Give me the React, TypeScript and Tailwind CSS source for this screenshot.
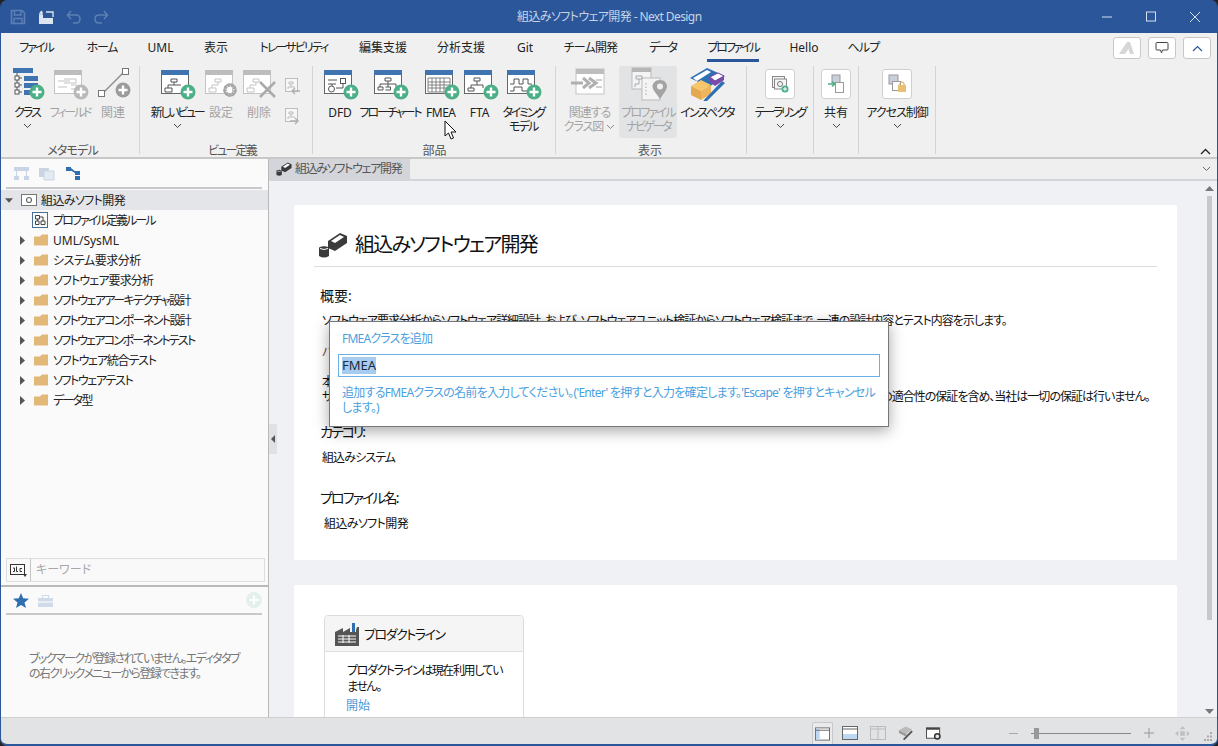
import type { ReactNode } from "react";

const Badge = ({ cx, cy, color = "#4caf87" }: { cx: number; cy: number; color?: string }) => (
  <g>
    <circle cx={cx} cy={cy} r={7.5} fill={color} />
    <path d={`M${cx - 4.5} ${cy}H${cx + 4.5}M${cx} ${cy - 4.5}V${cy + 4.5}`} stroke="#fff" strokeWidth={2.4} />
  </g>
);

const Win = ({ bar = "#3f74b0", line = "#666", children }: { bar?: string; line?: string; children?: ReactNode }) => (
  <g>
    <rect x="4.5" y="3.5" width="27" height="23" fill="#fff" stroke={line} />
    <rect x="4" y="3" width="28" height="5" fill={bar} />
    {children}
  </g>
);

const Icon = ({ children, w = 40 }: { children: ReactNode; w?: number }) => (
  <svg width={w} height="34" viewBox={`0 0 ${w} 34`} fill="none" className="shrink-0">
    {children}
  </svg>
);

const ClassIcon = () => (
  <Icon>
    <g transform="translate(-1 0)">
      <rect x="7" y="1" width="20" height="5" fill="#3f74b0" />
      <path d="M11 6V26M11 11H16M11 18H16M11 25H16" stroke="#555" />
      <rect x="9" y="9" width="4" height="4" fill="#fff" stroke="#555" />
      <rect x="9" y="16" width="4" height="4" fill="#fff" stroke="#555" />
      <rect x="9" y="23" width="4" height="4" fill="#fff" stroke="#555" />
      <rect x="18" y="9" width="14" height="5" fill="#3f74b0" />
      <rect x="18" y="16" width="14" height="5" fill="#3f74b0" />
      <rect x="18" y="23" width="10" height="5" fill="#3f74b0" />
      <Badge cx={31} cy={25} />
    </g>
  </Icon>
);

const FieldIcon = () => (
  <Icon>
    <Win bar="#bdbdbd" line="#c4c4c4">
      <path d="M8 14H20M8 20H17M14 12H26V16H14M21 18H27V22H21" stroke="#c4c4c4" />
    </Win>
    <Badge cx={31} cy={25} color="#b9b9b9" />
  </Icon>
);

const RelationIcon = () => (
  <Icon>
    <path d="M10 26L30 6" stroke="#8d8d8d" strokeWidth="1.5" />
    <rect x="5.5" y="23.5" width="6" height="6" fill="#fff" stroke="#777" />
    <rect x="29.5" y="1.5" width="6" height="6" fill="#fff" stroke="#777" />
    <Badge cx={30} cy={23} color="#9b9b9b" />
  </Icon>
);

const ViewIcon = () => (
  <Icon>
    <Win>
      <path d="M14 12H20V15H14ZM17 15V18H11V21M11 21H8V25H15V21H11M17 18H24" stroke="#555" />
    </Win>
    <Badge cx={31} cy={25} />
  </Icon>
);

const SettingIcon = () => (
  <Icon>
    <Win bar="#bdbdbd" line="#c4c4c4">
      <path d="M14 12H20V15H14ZM17 15V18H11V21M11 21H8V25H15V21H11" stroke="#c4c4c4" />
    </Win>
    <circle cx="29" cy="23" r="5" stroke="#a8a8a8" strokeWidth="3.5" strokeDasharray="2.4 1" />
    <circle cx="29" cy="23" r="5.6" stroke="#a8a8a8" strokeWidth="2" />
  </Icon>
);

const DeleteIcon = () => (
  <Icon>
    <Win bar="#bdbdbd" line="#c4c4c4">
      <path d="M14 12H20V15H14ZM17 15V18H11V21M11 21H8V25H15V21H11" stroke="#c4c4c4" />
    </Win>
    <path d="M21 15L36 30M36 15L21 30" stroke="#ababab" strokeWidth="2.6" />
  </Icon>
);

const DfdIcon = () => (
  <Icon>
    <Win>
      <path d="M8 13H17M8 17H16M12 17V21" stroke="#555" />
      <rect x="20.5" y="11.5" width="5" height="5" stroke="#555" />
      <path d="M23 17V21H16" stroke="#555" />
      <circle cx="11.5" cy="22" r="3" fill="#fff" stroke="#555" />
    </Win>
    <Badge cx={31} cy={25} />
  </Icon>
);

const FlowIcon = () => (
  <Icon>
    <Win>
      <path d="M15 11H21V14H15ZM18 14V17M10 20V17H26V20M8 20H13V23H8ZM15.5 20H20.5V23H15.5M18 17V20" stroke="#555" />
    </Win>
    <Badge cx={31} cy={25} />
  </Icon>
);

const FmeaIcon = () => (
  <Icon>
    <Win>
      <path d="M7 11H29V25H7ZM7 15H29M7 18H29M7 21H29M11 11V25M15 11V25M19 11V25M23 11V25" stroke="#777" strokeWidth="0.9" />
    </Win>
    <Badge cx={31} cy={25} />
  </Icon>
);

const FtaIcon = () => (
  <Icon>
    <Win>
      <path d="M14 11H20V14H14ZM17 14V18M11 18H23M11 18V21M23 18V21M8 21H14V24H8Z" stroke="#555" />
    </Win>
    <Badge cx={31} cy={25} />
  </Icon>
);

const TimingIcon = () => (
  <Icon>
    <Win>
      <path d="M7 17H11V12H16V17H20V12H25V17H29M7 24H11V20H19V24H25" stroke="#555" />
    </Win>
    <Badge cx={31} cy={25} />
  </Icon>
);

const RelatedDiagramIcon = () => (
  <Icon>
    <rect x="6" y="2" width="28" height="25" fill="#fff" stroke="#c4c4c4" />
    <rect x="6" y="2" width="28" height="5" fill="#bdbdbd" />
    <path d="M1 16H13M13 11L19 16L13 21M19 11L26 16L19 21" stroke="#b0b0b0" strokeWidth="3" />
    <path d="M26 13H32M26 20H32" stroke="#a0a0a0" />
  </Icon>
);

const NavigatorIcon = () => (
  <Icon>
    <rect x="4" y="1" width="19" height="21" fill="#f4f4f4" stroke="#bbb" />
    <rect x="4" y="1" width="19" height="4" fill="#b5b5b5" />
    <rect x="14" y="11" width="18" height="22" fill="#f4f4f4" stroke="#bbb" />
    <path d="M8 9H14V12H8ZM11 12V17H7V20" stroke="#a8a8a8" />
    <path d="M18 16V28" stroke="#aaa" strokeDasharray="1.5 2" />
    <path d="M32 13C27 13 24.5 16.5 24.5 19.5C24.5 23 29 27 32 32C35 27 39 23 39 19.5C39 16.5 37 13 32 13Z" fill="#a3a3a3" />
    <circle cx="32" cy="19.5" r="3" fill="#f0f0f0" />
  </Icon>
);

const InspectorIcon = () => (
  <Icon>
    <path d="M3 11L20 1L38 9L22 20Z" fill="#2f6fb5" />
    <path d="M6 11L20 3L24 5L10 14Z" fill="#fff" />
    <path d="M23 10L31 6L37 9L28 14Z" fill="#fff" stroke="#7c4aa8" />
    <path d="M23 10V15L28 19V14ZM28 14V19L37 13V9Z" fill="#7c4aa8" />
    <path d="M4 19L14 13L24 18L14 24Z" fill="#f7c66b" />
    <path d="M4 19V28L14 33V24Z" fill="#e4a94e" />
    <path d="M14 24V33L24 27V18Z" fill="#edb65c" />
    <path d="M17 33L35 14L38 16L20 34L15 36Z" fill="#2f6fb5" />
  </Icon>
);

const BoxButton = ({ children }: { children: ReactNode }) => (
  <span className="flex h-[30px] w-[30px] items-center justify-center rounded-[3px] border border-[#cfcfcf] bg-white">
    {children}
  </span>
);

const Chevron = ({ color = "#444" }: { color?: string }) => (
  <svg width="9" height="6" viewBox="0 0 9 6" fill="none">
    <path d="M1 1L4.5 4.5L8 1" stroke={color} />
  </svg>
);

type RibbonButtonProps = {
  icon: ReactNode;
  label: ReactNode;
  second?: ReactNode;
  chevron?: boolean;
  disabled?: boolean;
  active?: boolean;
  className: string;
  track?: string;
  track2?: string;
};

const RibbonButton = ({ icon, label, second, chevron, disabled, active, className, track = "", track2 = "" }: RibbonButtonProps) => (
  <div
    className={`flex h-[72px] flex-col items-center rounded-[2px] pt-[1px] ${className} ${active ? "bg-[#e2e3e5]" : ""} ${
      disabled ? "text-[#a3a3a3]" : "text-[#222]"
    }`}
  >
    <div className="flex h-[34px] items-center justify-center">{icon}</div>
    <span className={`mt-[4px] h-[15px] whitespace-nowrap text-[12px] leading-[15px] ${track}`}>{label}</span>
    {second ? <span className={`flex h-[14px] items-center whitespace-nowrap text-[12px] leading-[14px] ${track2}`}>{second}</span> : null}
    {chevron ? (
      <span className="flex h-[12px] items-center">
        <Chevron />
      </span>
    ) : null}
  </div>
);

const Group = ({ label, track = "", className, children }: { label?: string; track?: string; className: string; children: ReactNode }) => (
  <div className={`mt-[1px] flex h-[88px] shrink-0 flex-col items-stretch border-r border-[#d4d4d4] ${className}`}>
    <div className="flex h-[72px] items-start">{children}</div>
    <div className={`mt-[6px] h-[14px] text-center text-[12px] leading-[14px] text-[#555] ${track}`}>{label}</div>
  </div>
);

const tabs = [
  { name: "ファイル", cls: "w-[66px] tracking-[-2px]" },
  { name: "ホーム", cls: "w-[66px] tracking-[-1.3px]" },
  { name: "UML", cls: "w-[51px]" },
  { name: "表示", cls: "w-[60px]" },
  { name: "トレーサビリティ", cls: "w-[95px] tracking-[-1.9px]" },
  { name: "編集支援", cls: "w-[84px]" },
  { name: "分析支援", cls: "w-[72px]" },
  { name: "Git", cls: "w-[56px]" },
  { name: "チーム開発", cls: "w-[75px] tracking-[-0.8px]" },
  { name: "データ", cls: "w-[69px] tracking-[-2.2px]" },
  { name: "プロファイル", cls: "w-[72px] tracking-[-2.2px]" },
  { name: "Hello", cls: "w-[70px]" },
  { name: "ヘルプ", cls: "w-[49px] tracking-[-0.7px]" },
];

const SmallDoc = ({ dir }: { dir: "left" | "right" }) => (
  <svg width="18" height="18" viewBox="0 0 18 18" fill="none">
    <rect x="2.5" y="1.5" width="12" height="13" fill="#f7f7f7" stroke="#bdbdbd" />
    <path d="M6 5H10V7H6ZM8 7V10H5V12M8 10H12" stroke="#bdbdbd" />
    <path d={dir === "left" ? "M17 14H9M12 11L9 14L12 17" : "M7 14H15M12 11L15 14L12 17"} stroke="#b0b0b0" strokeWidth="1.4" />
  </svg>
);

const Ribbon = () => (
  <div className="relative h-[126px] shrink-0 border-b-2 border-[#c8c8c8] bg-[#f0f0f0]">
    <div className="flex h-[32px] pl-[2px]">
      {tabs.map((tab) => (
        <div key={tab.name} className={`flex shrink-0 justify-center ${tab.cls}`}>
          <span
            className={`h-[29px] whitespace-nowrap pt-[7px] text-[12px] leading-[16px] text-[#222] ${
              tab.name === "プロファイル" ? "border-b-[3px] border-[#2b579a]" : ""
            }`}
          >
            {tab.name}
          </span>
        </div>
      ))}
      <div className="ml-auto flex gap-[7px] pr-[6px] pt-[4px]">
        <span className="flex h-[22px] w-[28px] items-center justify-center rounded-[3px] border border-[#c8c8c8] bg-white">
          <svg width="18" height="14" viewBox="0 0 18 14" fill="none">
            <path d="M1 13L9 1H12L16 13H12L10.5 8L7 13Z" fill="#d6d6d6" />
          </svg>
        </span>
        <span className="flex h-[22px] w-[28px] items-center justify-center rounded-[3px] border border-[#c8c8c8] bg-white">
          <svg width="14" height="14" viewBox="0 0 14 14" fill="none">
            <path d="M2 1.5H12Q13 1.5 13 2.5V8Q13 9 12 9H7.5L6.5 12L5.5 9H2Q1 9 1 8V2.5Q1 1.5 2 1.5Z" stroke="#444" />
          </svg>
        </span>
        <span className="flex h-[22px] w-[28px] items-center justify-center rounded-[3px] border border-[#c8c8c8] bg-white">
          <svg width="11" height="7" viewBox="0 0 11 7" fill="none">
            <path d="M1 6L5.5 1.5L10 6" stroke="#2b579a" strokeWidth="1.2" />
          </svg>
        </span>
      </div>
    </div>
    <div className="flex">
      <Group label="メタモデル" track="tracking-[-0.8px]" className="w-[139px] pl-[5px]">
        <RibbonButton className="w-[42px]" track="tracking-[-2px]" icon={<ClassIcon />} label="クラス" chevron />
        <RibbonButton className="w-[44px]" track="tracking-[-2.2px]" icon={<FieldIcon />} label="フィールド" disabled />
        <RibbonButton className="w-[42px]" icon={<RelationIcon />} label="関連" disabled />
      </Group>
      <Group label="ビュー定義" track="tracking-[-1.8px]" className="w-[173px] pl-[12px]">
        <RibbonButton className="w-[50px]" track="tracking-[-2.3px]" icon={<ViewIcon />} label="新しいビュー" chevron />
        <RibbonButton className="w-[38px]" icon={<SettingIcon />} label="設定" disabled />
        <RibbonButton className="w-[38px]" icon={<DeleteIcon />} label="削除" disabled />
        <div className="ml-[5px] flex flex-col gap-[12px] pt-[11px]">
          <SmallDoc dir="left" />
          <SmallDoc dir="right" />
        </div>
      </Group>
      <Group label="部品" className="w-[243px] pl-[7px] pr-[6px]">
        <RibbonButton className="w-[40px]" icon={<DfdIcon />} label="DFD" />
        <RibbonButton className="w-[60px]" track="tracking-[-2px]" icon={<FlowIcon />} label="フローチャート" />
        <RibbonButton className="w-[42px]" track="tracking-[-0.5px]" icon={<FmeaIcon />} label="FMEA" />
        <RibbonButton className="w-[36px]" icon={<FtaIcon />} label="FTA" />
        <RibbonButton className="w-[52px]" track="tracking-[-2.2px]" track2="tracking-[-1.7px]" icon={<TimingIcon />} label="タイミング" second="モデル" />
      </Group>
      <Group label="表示" className="w-[191px] pl-[4px] pr-[6px]">
        <RibbonButton
          className="w-[59px]"
          track="tracking-[-1px]"
          track2="tracking-[-1px]"
          icon={<RelatedDiagramIcon />}
          label="関連する"
          second={
            <span className="flex items-center gap-[3px]">
              クラス図
              <Chevron color="#888" />
            </span>
          }
          disabled
        />
        <RibbonButton className="w-[58px]" track="tracking-[-1.8px]" track2="tracking-[-2.5px]" icon={<NavigatorIcon />} label="プロファイル" second="ナビゲータ" disabled active />
        <RibbonButton className="w-[60px]" track="tracking-[-1.7px]" icon={<InspectorIcon />} label="インスペクタ" />
      </Group>
      <Group className="w-[67px]">
        <RibbonButton
          className="w-full"
          track="tracking-[-2.3px]"
          icon={
            <BoxButton>
              <svg width="18" height="18" viewBox="0 0 18 18" fill="none">
                <rect x="1.5" y="1.5" width="12" height="11" fill="#f5f5f5" stroke="#888" />
                <rect x="3.5" y="4" width="12" height="10" fill="#f5f5f5" stroke="#888" />
                <circle cx="9" cy="9" r="2.5" stroke="#777" />
                <circle cx="14" cy="14" r="3.5" fill="#4caf87" />
                <path d="M12 14H16M14 12V16" stroke="#fff" />
              </svg>
            </BoxButton>
          }
          label="テーラリング"
          chevron
        />
      </Group>
      <Group className="w-[45px]">
        <RibbonButton
          className="w-full"
          icon={
            <BoxButton>
              <svg width="18" height="20" viewBox="0 0 18 20" fill="none">
                <rect x="5" y="1" width="8" height="8" fill="#c8d0dc" stroke="#999" />
                <rect x="8.5" y="8.5" width="8" height="10" fill="#fff" stroke="#999" />
                <path d="M1 10H7M5 7.5L8 10L5 12.5" stroke="#4caf87" strokeWidth="1.5" />
              </svg>
            </BoxButton>
          }
          label="共有"
          chevron
        />
      </Group>
      <Group className="w-[77px]">
        <RibbonButton
          className="w-full"
          track="tracking-[-1px]"
          icon={
            <BoxButton>
              <svg width="20" height="20" viewBox="0 0 20 20" fill="none">
                <rect x="2" y="1" width="9" height="9" fill="#c8d0dc" stroke="#999" />
                <rect x="5.5" y="7.5" width="8" height="9" fill="#fff" stroke="#999" />
                <rect x="11" y="11" width="8" height="7" fill="#eabf74" />
                <path d="M13 11V9Q15 6.5 17 9V11" stroke="#c9a060" />
              </svg>
            </BoxButton>
          }
          label="アクセス制御"
          chevron
        />
      </Group>
    </div>
    <svg className="absolute bottom-[2px] right-[6px]" width="11" height="7" viewBox="0 0 11 7" fill="none">
      <path d="M1 6L5.5 1.5L10 6" stroke="#222" strokeWidth="1.3" />
    </svg>
  </div>
);

const Folder = () => (
  <svg width="14" height="12" viewBox="0 0 14 12" className="shrink-0">
    <path d="M0 2.5H6L8 0.5H14V11.5H0Z" fill="#e1b877" />
  </svg>
);

const treeItems = [
  { name: "UML/SysML", cls: "" },
  { name: "システム要求分析", cls: "tracking-[-0.5px]" },
  { name: "ソフトウェア要求分析", cls: "tracking-[-0.9px]" },
  { name: "ソフトウェアアーキテクチャ設計", cls: "tracking-[-1.6px]" },
  { name: "ソフトウェアコンポーネント設計", cls: "tracking-[-1.65px]" },
  { name: "ソフトウェアコンポーネントテスト", cls: "tracking-[-1.7px]" },
  { name: "ソフトウェア統合テスト", cls: "tracking-[-1.2px]" },
  { name: "ソフトウェアテスト", cls: "tracking-[-1.4px]" },
  { name: "データ型", cls: "tracking-[-1.7px]" },
];

const LeftPanel = () => (
  <aside className="flex w-[268px] shrink-0 flex-col border-r border-[#b9b9b9] bg-[#fafafa]">
    <div className="flex min-h-0 flex-1 flex-col">
      <div className="ml-[5px] mr-[6px] flex h-[30px] items-center gap-[10px] border-b-2 border-[#c8c8c8] pl-[8px]">
        <svg width="15" height="13" viewBox="0 0 15 13" fill="#c9d5e4">
          <path d="M0 0H15V4H0ZM0 9H5V13H0ZM10 9H15V13H10ZM2 4H3V9H2ZM12 4H13V9H12Z" />
        </svg>
        <svg width="16" height="15" viewBox="0 0 16 15">
          <path d="M0 2H10V11H0Z" fill="#c9d5e4" />
          <path d="M5 5H15V14H5Z" fill="#e4eaf2" stroke="#c9d5e4" />
        </svg>
        <svg width="15" height="14" viewBox="0 0 15 14" fill="#2f6fad">
          <path d="M1 1H6V5H1ZM10 5H15V9H10ZM10 10H15V14H10ZM6 2L11 6L10 7L5 4Z" />
        </svg>
      </div>
      <div className="mt-[1px] flex h-[20px] items-center bg-[#e4e5e8] pl-[4px]">
        <svg width="8" height="5" viewBox="0 0 9 5" fill="#555" className="shrink-0">
          <path d="M0 0H9L4.5 5Z" />
        </svg>
        <span className="ml-[8px] flex h-[12px] w-[16px] items-center justify-center border border-[#777] bg-white">
          <svg width="8" height="8" viewBox="0 0 8 8" fill="none">
            <circle cx="4" cy="4" r="2.5" stroke="#666" strokeWidth="1.2" />
          </svg>
        </span>
        <span className="ml-[4px] mt-[2px] text-[12px] tracking-[-0.6px] text-[#222]">組込みソフト開発</span>
      </div>
      <div className="flex h-[20px] items-center pl-[31px]">
        <svg width="16" height="16" viewBox="0 0 16 16" fill="none" className="shrink-0">
          <rect x="0.5" y="0.5" width="15" height="15" stroke="#4a6d96" />
          <path d="M3.5 3.5H7.5V7H3.5ZM9 9H13V12.5H9ZM3.5 9H7V12.5H3.5ZM5.5 7V9M7.5 5H11V9" stroke="#444" />
        </svg>
        <span className="ml-[5px] mt-[2px] text-[12px] tracking-[-1.9px] text-[#222]">プロファイル定義ルール</span>
      </div>
      {treeItems.map((item) => (
        <div key={item.name} className="flex h-[20px] items-center pl-[19px]">
          <svg width="5" height="9" viewBox="0 0 5 9" fill="#555" className="shrink-0">
            <path d="M0 0L5 4.5L0 9Z" />
          </svg>
          <span className="ml-[9px] flex">
            <Folder />
          </span>
          <span className={`ml-[5px] mt-[2px] whitespace-nowrap text-[12px] text-[#222] ${item.cls}`}>{item.name}</span>
        </div>
      ))}
      <div className="mb-[3px] ml-[5px] mr-[3px] mt-auto flex h-[24px] items-center border border-[#dedede] bg-[#f9f9f9]">
        <span className="flex h-full w-[24px] items-center justify-center border-r border-[#c4c4c4]">
          <svg width="17" height="13" viewBox="0 0 17 13" fill="none">
            <rect x="0.5" y="0.5" width="14" height="10" stroke="#333" />
            <path d="M3 7.5H4.5V4H3M6.5 2.5V7.5H8M10 4.5H12M10 4.5V7.5H12" stroke="#333" />
            <path d="M13 10H17L15 13Z" fill="#333" />
          </svg>
        </span>
        <span className="ml-[5px] text-[12px] text-[#a8a8a8]">キーワード</span>
      </div>
    </div>
    <div className="h-[132px] shrink-0 border-t-2 border-[#b9b9b9]">
      <div className="ml-[5px] mr-[6px] flex h-[28px] items-center border-b-2 border-[#c8c8c8] pl-[7px]">
        <svg width="16" height="15" viewBox="0 0 16 15" fill="#2f6fad">
          <path d="M8 0L10.2 5.3L16 5.7L11.5 9.4L13 15L8 12L3 15L4.5 9.4L0 5.7L5.8 5.3Z" />
        </svg>
        <svg width="15" height="13" viewBox="0 0 15 13" className="ml-[9px]">
          <path d="M0 4H15V13H0ZM4 4V1H11V4H10V2H5V4Z" fill="#cfdbe8" />
          <path d="M0 8H15" stroke="#fff" />
        </svg>
        <svg width="16" height="16" viewBox="0 0 16 16" className="ml-auto">
          <circle cx="8" cy="8" r="8" fill="#e3f0ec" />
          <path d="M3.5 8H12.5M8 3.5V12.5" stroke="#fff" strokeWidth="2" />
        </svg>
      </div>
      <p className="ml-[28px] mt-[36px] whitespace-nowrap text-[12px] leading-[15px] tracking-[-1.6px] text-[#777]">
        ブックマークが登録されていません。エディタタブ
        <br />
        の右クリックメニューから登録できます。
      </p>
    </div>
  </aside>
);

const ProjectIcon = ({ scale }: { scale: "sm" | "lg" }) => (
  <svg
    width={scale === "lg" ? 28 : 16}
    height={scale === "lg" ? 26 : 14}
    viewBox="0 0 28 26"
    className="shrink-0"
  >
    <path d="M9 9L21 1L28 4V11L16 19L9 16Z" fill="#3b3b3b" />
    <path d="M12 9L21 3L25 5L16 11Z" fill="#fff" />
    <path d="M0 15.5Q5 13 10 15.5V24Q5 27 0 24Z" fill="#3b3b3b" />
    <path d="M1 16.5Q5 18.5 9 16.5" stroke="#fff" fill="none" />
  </svg>
);

const Content = () => (
  <div className="relative flex min-w-0 flex-1 flex-col bg-[#eff1f5]">
    <div className="flex h-[22px] shrink-0 border-b-2 border-[#d3d5da] bg-[#efefef]">
      <div className="flex h-[20px] w-[141px] items-center bg-[#d3d5da] pl-[7px]">
        <ProjectIcon scale="sm" />
        <span className="ml-[3px] whitespace-nowrap text-[12px] tracking-[-1.3px] text-[#555]">組込みソフトウェア開発</span>
      </div>
      <svg className="ml-auto mr-[6px] mt-[7px]" width="9" height="6" viewBox="0 0 9 6" fill="none">
        <path d="M1 1L4.5 4.5L8 1" stroke="#666" />
      </svg>
    </div>
    <div className="flex min-h-0 flex-1">
      <div className="min-h-0 flex-1 overflow-hidden pl-[25px] pr-[24px] pt-[24px]">
        <section className="h-[355px] rounded-[2px] bg-white px-[20px] pt-[21px]">
          <div className="flex h-[41px] items-center border-b border-[#dcdcdc] pb-[2px] pl-[5px]">
            <ProjectIcon scale="lg" />
            <h1 className="ml-[8px] text-[20px] font-normal leading-none tracking-[-1.75px] text-[#111]">組込みソフトウェア開発</h1>
          </div>
          <h2 className="mt-[19px] h-[20px] pl-[6px] text-[14px] font-normal leading-[20px] text-[#111]">概要:</h2>
          <p className="mt-[7px] h-[16px] whitespace-nowrap pl-[8px] text-[12px] leading-[16px] tracking-[-1px] text-[#111]">
            ソフトウェア要求分析からソフトウェア詳細設計、および、ソフトウェアユニット検証からソフトウェア検証まで、一連の設計内容とテスト内容を示します。
          </p>
          <p className="mt-[15px] h-[16px] pl-[8px] text-[12px] leading-[16px] text-[#8a3a2a]">バージョン</p>
          <p className="mt-[14px] whitespace-nowrap pl-[8px] text-[12px] leading-[15px] tracking-[-1px] text-[#111]">
            本プロファイルはサンプルです。
            <br />
            サンプルプロファイルの内容は予告なく変更される場合があります。サンプルの内容について、正確性、有用性、特定目的への適合性の保証を含め、当社は一切の保証は行いません。
          </p>
          <h2 className="mt-[18px] h-[20px] pl-[6px] text-[14px] font-normal leading-[20px] tracking-[-2px] text-[#111]">カテゴリ:</h2>
          <p className="mt-[8px] h-[16px] pl-[8px] text-[12px] leading-[16px] tracking-[-0.9px] text-[#111]">組込みシステム</p>
          <h2 className="mt-[22px] h-[20px] pl-[6px] text-[14px] font-normal leading-[20px] tracking-[-1.9px] text-[#111]">プロファイル名:</h2>
          <p className="mt-[8px] h-[16px] pl-[10px] text-[12px] leading-[16px] tracking-[-0.6px] text-[#111]">組込みソフト開発</p>
        </section>
        <section className="mt-[25px] h-[300px] rounded-[2px] bg-white pl-[30px] pt-[30px]">
          <div className="h-[200px] w-[200px] rounded-[4px] border border-[#dcdcdc]">
            <div className="flex h-[36px] items-center rounded-t-[4px] border-b border-[#dcdcdc] bg-[#f5f5f5] pl-[10px]">
              <svg width="24" height="24" viewBox="0 0 24 24" className="shrink-0">
                <path d="M0 24V10L8 6V10L15 6V10H21V8L22 5H24V24Z" fill="#555" />
                <rect x="17" y="1" width="3" height="9" fill="#2f6fad" />
                <path d="M3 14H21M3 17H21M3 20H21M8 13V21M14 13V21" stroke="#fff" />
              </svg>
              <span className="ml-[5px] mt-[3px] whitespace-nowrap text-[13px] tracking-[-1.5px] text-[#111]">プロダクトライン</span>
            </div>
            <p className="ml-[22px] mt-[11px] whitespace-nowrap text-[12px] leading-[16px] tracking-[-1.4px] text-[#111]">
              プロダクトラインは現在利用してい
              <br />
              ません。
            </p>
            <p className="ml-[21px] mt-[3px] text-[12px] leading-[16px] text-[#4a9ad8]">開始</p>
          </div>
        </section>
      </div>
      <div className="flex w-[16px] shrink-0 flex-col pb-[3px] pl-[6px] pt-[5px]">
        <svg width="9" height="5" viewBox="0 0 9 5" fill="#777" className="-ml-[2px] shrink-0">
          <path d="M4.5 0L9 5H0Z" />
        </svg>
        <div className="mt-[5px] h-[424px] w-[5px] shrink-0 bg-[#c8c8c8]" />
        <svg width="9" height="5" viewBox="0 0 9 5" fill="#777" className="-ml-[2px] mt-auto shrink-0">
          <path d="M0 0H9L4.5 5Z" />
        </svg>
      </div>
    </div>
    <div className="absolute left-0 top-[265px] flex h-[30px] w-[8px] items-center justify-center bg-[#e0e1e5]">
      <svg width="4" height="8" viewBox="0 0 4 8" fill="#555">
        <path d="M4 0L0 4L4 8Z" />
      </svg>
    </div>
  </div>
);

const StatusBar = () => (
  <div className="flex h-[27px] shrink-0 items-end border-t border-[#cfcfcf] bg-[#e2e3e5] pr-[3px]">
    <div className="ml-[811px] flex h-[22px] items-center rounded-t-[2px] border border-b-0 border-[#c8c8c8] bg-[#eaeaec] px-[2px]">
      <svg width="15" height="14" viewBox="0 0 16 14" className="shrink-0">
        <rect x="0.5" y="0.5" width="15" height="13" fill="#fff" stroke="#666" />
        <rect x="1" y="1" width="4" height="12" fill="#bcd8f2" />
        <path d="M1 3H15" stroke="#666" />
      </svg>
    </div>
    <div className="flex h-[22px] items-center">
      <svg className="ml-[9px]" width="16" height="14" viewBox="0 0 16 14">
        <rect x="0.5" y="0.5" width="15" height="13" fill="#fff" stroke="#666" />
        <rect x="1" y="8" width="14" height="5" fill="#bcd8f2" />
        <path d="M1 3H15" stroke="#666" />
      </svg>
      <svg className="ml-[12px]" width="16" height="14" viewBox="0 0 16 14" fill="none">
        <rect x="0.5" y="0.5" width="15" height="13" stroke="#bbb" />
        <path d="M8 1V13M1 3H15" stroke="#bbb" />
      </svg>
      <svg className="ml-[12px]" width="16" height="17" viewBox="0 0 17 17">
        <path d="M1 5L8 1L15 4L9 9Z" fill="#bbb" />
        <path d="M1 5L1 8L9 12L9 9Z" fill="#999" />
        <path d="M6 15L15 6" stroke="#555" strokeWidth="2" />
      </svg>
      <svg className="ml-[12px]" width="16" height="15" viewBox="0 0 17 15" fill="none">
        <rect x="0.5" y="1.5" width="14" height="11" fill="#fff" stroke="#444" />
        <path d="M1 2.5H14" stroke="#444" strokeWidth="2" />
        <circle cx="12" cy="10.5" r="2.8" fill="#e2e3e5" stroke="#333" strokeWidth="1.6" />
      </svg>
      <span className="ml-[67px] h-px w-[9px] bg-[#a8a8a8]" />
      <div className="relative ml-[13px] h-px w-[100px] bg-[#888]">
        <span className="absolute left-[3px] top-[-5px] h-[11px] w-[5px] bg-[#999]" />
      </div>
      <svg className="ml-[13px]" width="10" height="10" viewBox="0 0 10 10" fill="none">
        <path d="M0 5H10M5 0V10" stroke="#999" />
      </svg>
      <svg className="ml-[21px]" width="15" height="15" viewBox="0 0 16 16" fill="#c0c0c0">
        <path d="M8 0L11 3.5H5ZM8 16L5 12.5H11ZM0 8L3.5 5V11ZM16 8L12.5 11V5ZM5.5 5.5H10.5V10.5H5.5Z" />
      </svg>
      <svg className="ml-[13px] mt-[8px]" width="10" height="10" viewBox="0 0 10 10" fill="#aaa">
        <path d="M7 0H9V2H7ZM4 3.5H6V5.5H4ZM7 3.5H9V5.5H7ZM1 7H3V9H1ZM4 7H6V9H4ZM7 7H9V9H7Z" />
      </svg>
    </div>
  </div>
);

export default function App() {
  return (
    <div className="h-[746px] w-[1218px] overflow-hidden bg-[#222] font-['Noto_Sans','Noto_Sans_CJK_JP',sans-serif] [font-feature-settings:'palt']">
      <div className="relative flex h-full w-full flex-col overflow-hidden rounded-[7px] border-x border-b-2 border-[#2b579a]">
        <header className="flex h-[33px] shrink-0 items-center bg-[#2b579a]">
          <div className="flex w-[130px] items-center pl-[9px]">
            <svg width="16" height="16" viewBox="0 0 16 16" fill="none">
              <path d="M1.5 1.5H12L14.5 4V14.5H1.5Z" stroke="#5d80b4" strokeWidth="1.6" />
              <path d="M4.5 2V6H11V2M4 14V9.5H12V14" stroke="#5d80b4" strokeWidth="1.4" />
            </svg>
            <svg className="ml-[12px]" width="16" height="16" viewBox="0 0 16 16" fill="none">
              <path d="M1 15V6H5V9H15V15Z" fill="#dbe4f0" />
              <path d="M1 5H4M4 2L2 4M8 3H15V8M4 3V7" stroke="#dbe4f0" strokeWidth="1.4" />
            </svg>
            <svg className="ml-[12px]" width="15" height="14" viewBox="0 0 15 14" fill="none">
              <path d="M2 5H10Q14 5 14 9T10 13H7M5 1L1.5 5L5 9" stroke="#5d80b4" strokeWidth="1.5" />
            </svg>
            <svg className="ml-[13px]" width="15" height="14" viewBox="0 0 15 14" fill="none">
              <path d="M13 5H5Q1 5 1 9T5 13H8M10 1L13.5 5L10 9" stroke="#5d80b4" strokeWidth="1.5" />
            </svg>
          </div>
          <div className="ml-[386px] whitespace-nowrap text-[12px] tracking-[-0.6px] text-[#c6d3e6]">組込みソフトウェア開発 - Next Design</div>
          <div className="ml-auto flex h-full items-center text-[#dbe4f0]">
            <svg width="44" height="12" viewBox="0 0 44 12" fill="none">
              <path d="M17 6H27" stroke="#d5dfee" />
            </svg>
            <svg width="44" height="12" viewBox="0 0 44 12" fill="none">
              <rect x="17.5" y="1" width="9" height="9" stroke="#d5dfee" />
            </svg>
            <svg width="44" height="12" viewBox="0 0 44 12" fill="none">
              <path d="M17 1L27 11M27 1L17 11" stroke="#d5dfee" />
            </svg>
          </div>
        </header>
        <Ribbon />
        <div className="flex min-h-0 flex-1">
          <LeftPanel />
          <Content />
        </div>
        <StatusBar />

        <div className="absolute left-[328px] top-[321px] h-[106px] w-[560px] border border-[#777] bg-white px-[8px] shadow-[0_4px_14px_rgba(0,0,0,0.35)]">
          <p className="ml-[4px] mt-[9px] h-[16px] text-[12px] leading-[16px] tracking-[-0.8px] text-[#4a9fde]">FMEAクラスを追加</p>
          <div className="mt-[7px] flex h-[23px] w-[542px] items-center border border-[#6ab0e6] pl-[3px] text-[13px] text-[#1c2a3a]">
            <span className="bg-[#a6cdf0] leading-[17px]">FMEA</span>
          </div>
          <p className="ml-[4px] mt-[8px] whitespace-nowrap text-[12px] leading-[15px] tracking-[-0.7px] text-[#4a9fde]">
            追加するFMEAクラスの名前を入力してください。('Enter' を押すと入力を確定します。'Escape' を押すとキャンセル
            <br />
            します。)
          </p>
        </div>
        <svg className="absolute left-[443px] top-[120px]" width="14" height="20" viewBox="0 0 14 20">
          <path d="M1 1V16L4.5 13L7 19L9.5 18L7 12L12 12Z" fill="#fff" stroke="#111" />
        </svg>
      </div>
    </div>
  );
}
